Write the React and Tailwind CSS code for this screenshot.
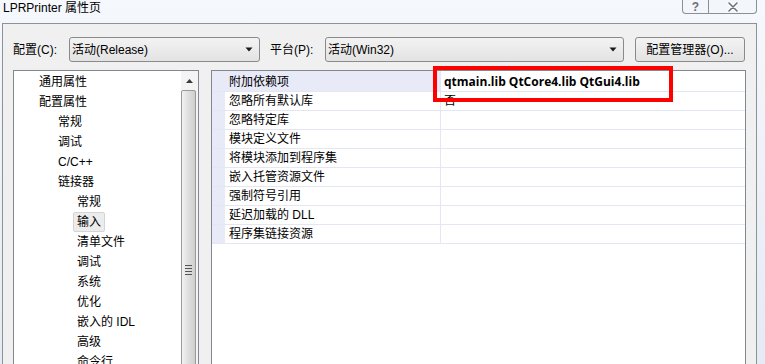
import React from "react";

const F = "font-['Liberation_Sans','Noto_Sans_CJK_SC',sans-serif]";

const tree = [
  { t: "通用属性", l: 0 },
  { t: "配置属性", l: 0 },
  { t: "常规", l: 1 },
  { t: "调试", l: 1 },
  { t: "C/C++", l: 1 },
  { t: "链接器", l: 1 },
  { t: "常规", l: 2 },
  { t: "输入", l: 2, sel: true },
  { t: "清单文件", l: 2 },
  { t: "调试", l: 2 },
  { t: "系统", l: 2 },
  { t: "优化", l: 2 },
  { t: "嵌入的 IDL", l: 2 },
  { t: "高级", l: 2 },
  { t: "命令行", l: 2 },
];

const props = [
  { n: "附加依赖项", v: "qtmain.lib QtCore4.lib QtGui4.lib", bold: true, hl: true },
  { n: "忽略所有默认库", v: "否" },
  { n: "忽略特定库", v: "" },
  { n: "模块定义文件", v: "" },
  { n: "将模块添加到程序集", v: "" },
  { n: "嵌入托管资源文件", v: "" },
  { n: "强制符号引用", v: "" },
  { n: "延迟加载的 DLL", v: "" },
  { n: "程序集链接资源", v: "" },
];

function Arrow() {
  return (
    <svg width="8" height="5" viewBox="0 0 8 5" className="shrink-0">
      <path d="M0.5 0.5 H7.5 L4 4.5 Z" fill="#1a1a1a" />
    </svg>
  );
}

function Select({ w, text }) {
  return (
    <div
      className={`h-[25px] ${w} shrink-0 flex items-center justify-between pl-[2px] pr-[6px] rounded-[3px] border border-[#8a8a8a] bg-gradient-to-b from-[#f3f3f3] to-[#e3e3e3] text-[12px] text-black`}
    >
      <span>{text}</span>
      <Arrow />
    </div>
  );
}

export default function App() {
  const indent = ["pl-[25px]", "pl-[44px]", "pl-[59px]"];
  return (
    <div
      className={`w-[765px] h-[364px] overflow-hidden flex flex-col bg-gradient-to-b from-[#f5f8fc] to-[#e4ebf4] ${F} text-[12px] text-black`}
    >
      {/* title bar */}
      <div className="h-[23px] shrink-0 flex items-start justify-between">
        <div className="pl-[3px] pt-[1px] leading-[14px] text-[12px] text-black">LPRPrinter 属性页</div>
        <div className="flex mr-[8px] h-[14px] border border-t-0 border-[#8b9098] rounded-b-[4px] bg-[#f2f5f9]/70 overflow-hidden">
          <div className="w-[26px] flex items-center justify-center border-r border-[#8b9098] text-[12px] leading-[12px] text-[#6b6f75] font-bold">
            ?
          </div>
          <div className="w-[47px] flex items-center justify-center">
            <svg width="12" height="10" viewBox="0 0 12 10">
              <path d="M2 1 L10 9 M10 1 L2 9" stroke="#ffffff" strokeWidth="3.4" strokeLinecap="round" />
              <path d="M2 1 L10 9 M10 1 L2 9" stroke="#6d7179" strokeWidth="1.6" strokeLinecap="round" />
            </svg>
          </div>
        </div>
      </div>

      {/* body */}
      <div className="ml-[2px] w-[755px] flex-1 bg-[#f0f0f0] border border-b-0 border-[#8e9196] flex flex-col overflow-hidden">
        <div className="flex items-center pl-[10px] pt-[13px]">
          <div className="w-[56px] shrink-0">配置(C):</div>
          <Select w="w-[191px]" text="活动(Release)" />
          <div className="ml-[10px] w-[55px] shrink-0">平台(P):</div>
          <Select w="w-[299px]" text="活动(Win32)" />
          <div className="ml-[11px] h-[25px] w-[110px] shrink-0 flex items-center justify-center rounded-[3px] border border-[#8a8a8a] bg-gradient-to-b from-[#f3f3f3] to-[#e3e3e3]">
            配置管理器(O)...
          </div>
        </div>

        <div className="flex pl-[10px] mt-[8px] flex-1">
          {/* tree */}
          <div className="w-[186px] h-[320px] shrink-0 border border-[#828790] bg-white flex">
            <div className="flex-1 pt-[1px] flex flex-col">
              {tree.map((it, i) => (
                <div key={i} className={`h-[20px] shrink-0 flex items-center ${indent[it.l]}`}>
                  {it.sel ? (
                    <span className="h-[20px] flex items-center px-[3px] rounded-[2px] border border-[#d4d4d4] bg-[#ececec]">
                      {it.t}
                    </span>
                  ) : (
                    <span className={it.l === 2 ? "pl-[4px]" : ""}>{it.t}</span>
                  )}
                </div>
              ))}
            </div>
            <div className="w-[17px] shrink-0 bg-[#f4f4f4] flex flex-col items-center">
              <div className="h-[19px] w-full flex items-center justify-center">
                <svg width="7" height="4" viewBox="0 0 7 4">
                  <path d="M0 4 L3.5 0 L7 4 Z" fill="#3c3c3c" />
                </svg>
              </div>
              <div className="w-[15px] self-start flex-1 rounded-[2px] border border-[#9a9a9a] bg-gradient-to-r from-[#f2f2f2] via-[#dedede] to-[#cfcfcf] flex flex-col items-center">
                <div className="mt-[174px] flex flex-col gap-[2px]">
                  <div className="w-[7px] h-[1px] bg-[#555]" />
                  <div className="w-[7px] h-[1px] bg-[#555]" />
                  <div className="w-[7px] h-[1px] bg-[#555]" />
                  <div className="w-[7px] h-[1px] bg-[#555]" />
                </div>
              </div>
            </div>
          </div>

          {/* property grid */}
          <div className="ml-[12px] w-[535px] h-[320px] shrink-0 border border-[#828790] bg-white relative">
            <div className="flex flex-col">
              {props.map((p, i) => (
                <div key={i} className={`${i === 0 ? "h-[21px]" : "h-[19px]"} flex border-b border-[#e4e6f4]`}>
                  <div className="w-[13px] shrink-0 bg-[#e8eaf8]" />
                  <div
                    className={`w-[216px] shrink-0 flex items-center pl-[4px] border-r border-[#e4e6f4] ${
                      p.hl ? "bg-[#e8eaf8] pt-[1px]" : ""
                    }`}
                  >
                    {p.n}
                  </div>
                  <div
                    className={`flex-1 flex items-center pl-[3px] ${
                      p.bold ? "font-bold font-['Open_Sans','Liberation_Sans',sans-serif] pt-[1px]" : ""
                    }`}
                  >
                    {p.v}
                  </div>
                </div>
              ))}
            </div>
            <div className="absolute left-[221px] top-[-5px] w-[240px] h-[36px] border-[4px] border-[#ff0000]" />
          </div>
        </div>
      </div>
    </div>
  );
}
